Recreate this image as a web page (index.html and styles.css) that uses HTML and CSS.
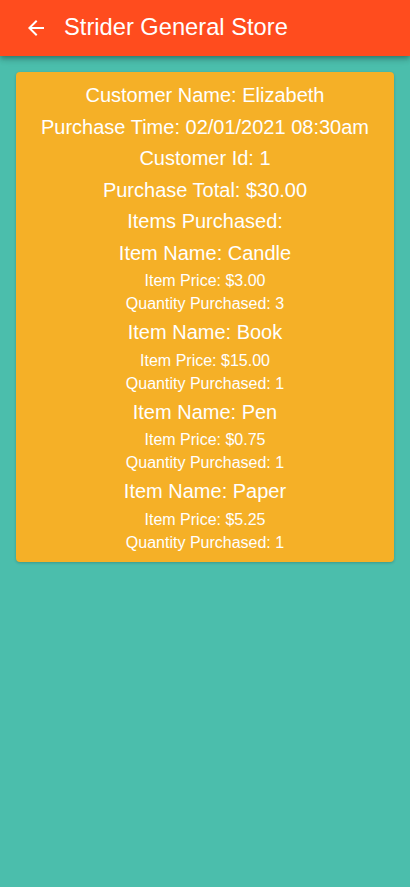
FILE: index.html
```html
<!DOCTYPE html>
<html>
<head>
<meta charset="utf-8">
<link rel="stylesheet" href="styles.css">
</head>
<body>
<header class="appbar">
  <svg class="back" width="24" height="24" viewBox="0 0 24 24"><path d="M20 11H7.83l5.59-5.59L12 4l-8 8 8 8 1.41-1.41L7.83 13H20v-2z" fill="#fff"/></svg>
  <h1 class="title">Strider General Store</h1>
</header>
<main class="content">
  <section class="card">
    <p class="big">Customer Name: Elizabeth</p>
    <p class="big">Purchase Time: 02/01/2021 08:30am</p>
    <p class="big">Customer Id: 1</p>
    <p class="big">Purchase Total: $30.00</p>
    <p class="big">Items Purchased:</p>
    <div class="item">
      <p class="big">Item Name: Candle</p>
      <p class="small">Item Price: $3.00</p>
      <p class="small">Quantity Purchased: 3</p>
    </div>
    <div class="item">
      <p class="big">Item Name: Book</p>
      <p class="small">Item Price: $15.00</p>
      <p class="small">Quantity Purchased: 1</p>
    </div>
    <div class="item">
      <p class="big">Item Name: Pen</p>
      <p class="small">Item Price: $0.75</p>
      <p class="small">Quantity Purchased: 1</p>
    </div>
    <div class="item">
      <p class="big">Item Name: Paper</p>
      <p class="small">Item Price: $5.25</p>
      <p class="small">Quantity Purchased: 1</p>
    </div>
  </section>
</main>
</body>
</html>
```
FILE: styles.css
```css
html, body {
  margin: 0;
  padding: 0;
  height: 100%;
}
body {
  background: #4bbeac;
  font-family: "Liberation Sans", Arial, sans-serif;
  color: #fff;
}
.appbar {
  height: 56px;
  background: #ff4c1e;
  display: flex;
  align-items: center;
  padding: 0 0 0 24px;
  box-shadow: 0 2px 4px -1px rgba(0,0,0,0.2), 0 4px 5px 0 rgba(0,0,0,0.14), 0 1px 10px 0 rgba(0,0,0,0.12);
  position: relative;
  z-index: 1;
}
.back {
  display: block;
  flex: none;
}
.title {
  margin: 0 0 0 16px;
  font-size: 23.7px;
  font-weight: normal;
  line-height: 1;
}
.content {
  padding: 16px 16px;
}
.card {
  background: #f5b027;
  border-radius: 4px;
  padding: 8px 0 6.5px;
  text-align: center;
  box-shadow: 0 1px 3px rgba(0,0,0,0.2);
}
.card p {
  margin: 0;
}
.big {
  font-size: 20px;
  line-height: 23.5px;
  padding: 4px 0;
}
.small {
  font-size: 16px;
  line-height: 17px;
  padding: 3px 0;
}
.item {
  padding-bottom: 2px;
}
```
